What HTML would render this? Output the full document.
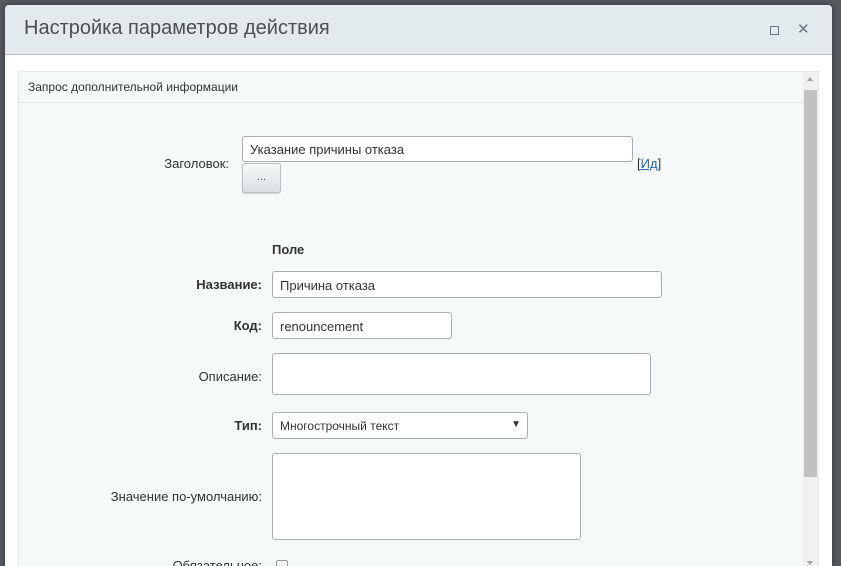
<!DOCTYPE html>
<html><head><meta charset="utf-8"><style>
*{box-sizing:border-box;margin:0;padding:0}
html,body{width:841px;height:566px;overflow:hidden}
body{background:#55595e;font-family:"Liberation Sans",Arial,sans-serif;position:relative}
.dlg{position:absolute;left:5px;top:5px;width:827px;height:561px;background:#fff;border-radius:4px 4px 0 0;box-shadow:0 0 6px rgba(0,0,0,.4);overflow:hidden}
.hd{height:50px;background:#e3eaed;border-bottom:1px solid #b8c0c4;border-radius:4px 4px 0 0;position:relative}
.hd h1{position:absolute;left:19px;top:12px;font-size:20px;font-weight:normal;color:#4b4f52}
.ic{position:absolute;top:21px;width:9px;height:9px;border:1.5px solid #6b7479}
.x{position:absolute;left:792px;top:15px;font-size:15px;color:#6b7479}
.pan{position:absolute;left:13px;top:66px;width:801px;height:520px;background:#f5f9fa;border:1px solid #e4e9eb}
.ph{height:31px;border-bottom:1px solid #e1e7e9;font-size:12px;color:#333;padding:8px 9px;width:785px}
.sb{position:absolute;right:0;top:0;width:15px;height:100%;background:#f0f0f0}
.th{position:absolute;left:1px;top:18px;width:13px;height:387px;background:#c1c1c1}
.lbl{position:absolute;font-size:13px;color:#333;text-align:right}
.b{font-weight:bold}
.inp{position:absolute;background:#fff;border:1px solid #a9aeb1;border-radius:3px;font-size:13px;color:#333;padding:6px 7px}
</style></head><body>
<div class="dlg">
<div class="hd"><h1>Настройка параметров действия</h1>
<div class="ic" style="left:765px"></div><div class="x">✕</div></div>
<div class="pan">
<div class="ph">Запрос дополнительной информации</div>
<div class="sb"><div style="position:absolute;left:4px;top:5px;border:3.5px solid transparent;border-bottom:4px solid #a0a0a0;border-top:0"></div><div class="th"></div><div style="position:absolute;left:4px;top:489px;border:3.5px solid transparent;border-top:4px solid #a0a0a0;border-bottom:0"></div></div>
</div>
</div>
<div class="lbl" style="left:100px;width:129px;top:156px">Заголовок:</div>
<div class="inp" style="left:242px;top:136px;width:391px;height:26px;padding-top:5px">Указание причины отказа</div>
<div style="position:absolute;left:242px;top:163px;width:39px;height:30px;border:1px solid #b9bfc2;border-radius:3px;background:linear-gradient(#f8fafa,#d9e0e3);font-size:11px;text-align:center;line-height:26px;color:#555;box-shadow:0 1px 1px rgba(0,0,0,.15)">...</div>
<div style="position:absolute;left:637px;top:156px;font-size:13px;color:#333">[<span style="color:#2067b0;text-decoration:underline">Ид</span>]</div>
<div class="lbl b" style="left:272px;top:242px;text-align:left">Поле</div>
<div class="lbl b" style="left:100px;width:162px;top:277px">Название:</div>
<div class="inp" style="left:272px;top:271px;width:390px;height:27px">Причина отказа</div>
<div class="lbl b" style="left:100px;width:162px;top:318px">Код:</div>
<div class="inp" style="left:272px;top:312px;width:180px;height:27px">renouncement</div>
<div class="lbl" style="left:100px;width:162px;top:369px">Описание:</div>
<div class="inp" style="left:272px;top:353px;width:379px;height:42px"></div>
<div class="lbl b" style="left:100px;width:162px;top:418px">Тип:</div>
<div class="inp" style="left:272px;top:412px;width:256px;height:27px;font-size:12px">Многострочный текст<span style="position:absolute;right:6px;top:6px;font-size:10px">▼</span></div>
<div class="lbl" style="left:60px;width:202px;top:489px">Значение по-умолчанию:</div>
<div class="inp" style="left:272px;top:453px;width:309px;height:87px"></div>
<div class="lbl" style="left:100px;width:162px;top:558px">Обязательное:</div>
<div style="position:absolute;left:276px;top:560px;width:12px;height:12px;border:1px solid #999;border-radius:2px;background:#f3f3f3"></div>
</body></html>
